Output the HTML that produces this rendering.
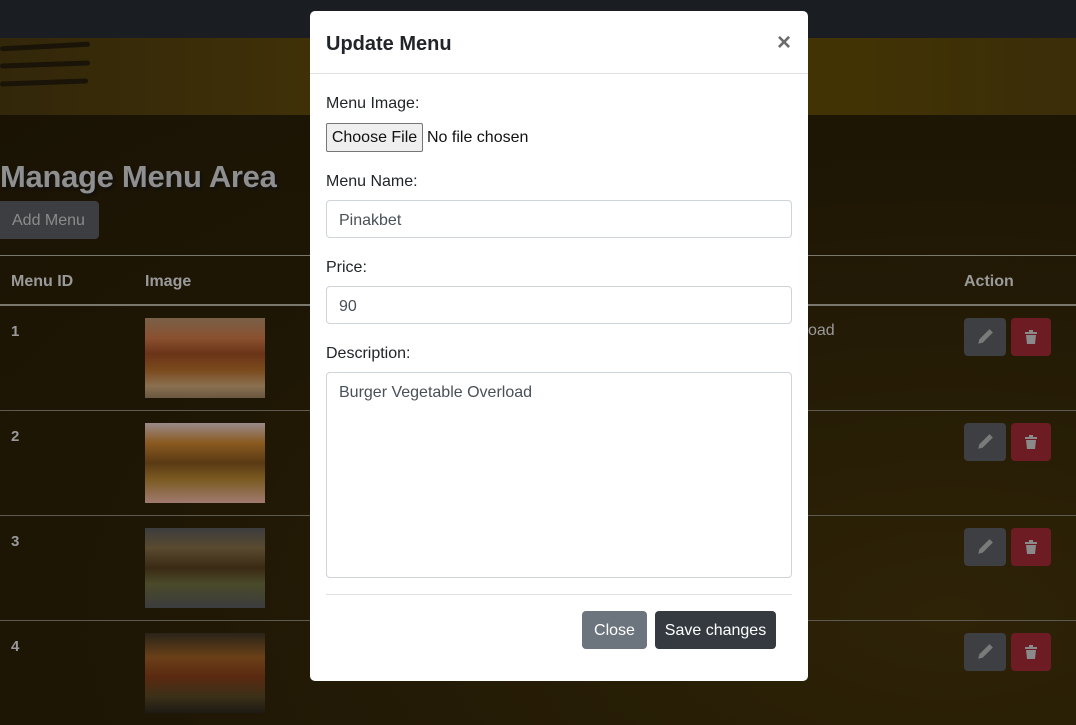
<!DOCTYPE html>
<html><head><meta charset="utf-8"><style>
*{box-sizing:border-box;margin:0;padding:0}
body{width:1076px;height:725px;overflow:hidden;font-family:"Liberation Sans",sans-serif;position:relative;background:#1e1604}
.nav{position:absolute;left:0;top:0;width:1076px;height:38px;background:#1a1e23}
.band{position:absolute;left:0;top:38px;width:1076px;height:77px;background:linear-gradient(90deg,#33270a,#443406 40%,#423305 80%,#3a2d08)}
.main{position:absolute;left:0;top:115px;width:1076px;height:610px;background:radial-gradient(ellipse at 950px 500px,#2e2307,#1f1705 60%,#1a1304)}
.fork{position:absolute;height:5px;background:#1a1408;border-radius:3px}
h1{position:absolute;left:0;top:159px;font-size:31px;color:#8f8f8f;font-weight:bold;text-shadow:2px 2px 2px #111;letter-spacing:-0.3px}
.add{position:absolute;left:0;top:201px;width:99px;height:38px;background:#3c3e42;border-radius:0 4px 4px 0;color:#8c8c8c;font-size:16px;line-height:40px;padding-left:12px}
.hl{position:absolute;left:0;width:1076px;background:#7a776d}
.th{position:absolute;top:273px;color:#9a9a9a;font-weight:bold;font-size:16px}
.id{position:absolute;left:11px;color:#9a9a9a;font-weight:bold;font-size:15px}
.img{position:absolute;left:145px;width:120px;height:80px}
.eb,.db{position:absolute;width:42px;height:38px;border-radius:4px}
.eb{left:964px;background:#3d3f43}
.db{left:1011px;width:40px;background:#6e1c23}
.eb svg,.db svg{position:absolute;left:12px;top:10px}
.modal{position:absolute;left:310px;top:11px;width:498px;height:670px;background:#fff;border-radius:5px}
.mh{height:63px;border-bottom:1px solid #dee2e6;position:relative}
.mh b{position:absolute;left:16px;top:22px;font-size:20px;color:#212529;font-weight:bold}
.x{position:absolute;right:17px;top:18px;font-size:24px;color:#6c6c6c;font-weight:bold}
.lab{position:absolute;left:16px;font-size:16px;color:#212529}
.inp{position:absolute;left:16px;width:466px;border:1px solid #ced4da;border-radius:4px;font-size:16px;color:#495057;padding-left:12px}
.cf{position:absolute;left:16px;top:112px;width:97px;height:29px;background:#efefef;border:1px solid #767676;border-radius:2px;font-size:16px;text-align:center;line-height:27px;color:#111}
.btn{position:absolute;top:600px;height:38px;border-radius:4px;color:#fff;font-size:16px;line-height:40px;text-align:center}
</style></head><body>
<div class="nav"></div>
<div class="band"></div>
<div class="fork" style="left:0;top:44px;width:90px;transform:rotate(-3deg)"></div>
<div class="fork" style="left:0;top:62px;width:90px;transform:rotate(-2deg)"></div>
<div class="fork" style="left:0;top:80px;width:88px;transform:rotate(-2deg)"></div>
<div class="main"></div>
<h1>Manage Menu Area</h1>
<div class="add">Add Menu</div>
<div class="hl" style="top:255px;height:1px"></div>
<div class="th" style="left:11px">Menu ID</div>
<div class="th" style="left:145px">Image</div>
<div class="th" style="left:964px">Action</div>
<div class="hl" style="top:304px;height:2px"></div>
<div class="hl" style="top:410px;height:1px;background:#5e5a50"></div>
<div class="hl" style="top:515px;height:1px;background:#5e5a50"></div>
<div class="hl" style="top:620px;height:1px;background:#5e5a50"></div>
<div class="id" style="top:323px">1</div>
<div class="id" style="top:428px">2</div>
<div class="id" style="top:533px">3</div>
<div class="id" style="top:638px">4</div>
<div style="position:absolute;left:808px;top:322px;color:#9a9a9a;font-size:16px">oad</div>
<div class="img" style="top:318px;background:linear-gradient(180deg,#7a6048 0,#8a5030 25%,#6a3418 45%,#7a4a1c 65%,#8a7050 85%,#6a5840 100%)"></div>
<div class="img" style="top:423px;background:linear-gradient(180deg,#9a8a8a 0,#8a5a20 25%,#5a3a14 50%,#7a5a20 70%,#a07a70 100%)"></div>
<div class="img" style="top:528px;background:linear-gradient(180deg,#3c3c3e 0,#5a4a30 25%,#3a2a14 50%,#4a4a2a 70%,#3c3c3e 100%)"></div>
<div class="img" style="top:633px;background:linear-gradient(180deg,#2a2418 0,#6a4018 30%,#5a2a10 55%,#3a3018 80%,#1e1a14 100%)"></div>
<div class="eb" style="top:318px"><svg width="18" height="18" viewBox="0 0 16 16"><path d="M12 1l3 3-9 9-4 1 1-4z" fill="#7a7a7a"/></svg></div>
<div class="db" style="top:318px"><svg width="16" height="18" viewBox="0 0 16 16"><path d="M2 3h12v2H2zM6 1h4v2H6zM3 6h10l-1 9H4z" fill="#8a8a8a"/></svg></div>
<div class="eb" style="top:423px"><svg width="18" height="18" viewBox="0 0 16 16"><path d="M12 1l3 3-9 9-4 1 1-4z" fill="#7a7a7a"/></svg></div>
<div class="db" style="top:423px"><svg width="16" height="18" viewBox="0 0 16 16"><path d="M2 3h12v2H2zM6 1h4v2H6zM3 6h10l-1 9H4z" fill="#8a8a8a"/></svg></div>
<div class="eb" style="top:528px"><svg width="18" height="18" viewBox="0 0 16 16"><path d="M12 1l3 3-9 9-4 1 1-4z" fill="#7a7a7a"/></svg></div>
<div class="db" style="top:528px"><svg width="16" height="18" viewBox="0 0 16 16"><path d="M2 3h12v2H2zM6 1h4v2H6zM3 6h10l-1 9H4z" fill="#8a8a8a"/></svg></div>
<div class="eb" style="top:633px"><svg width="18" height="18" viewBox="0 0 16 16"><path d="M12 1l3 3-9 9-4 1 1-4z" fill="#7a7a7a"/></svg></div>
<div class="db" style="top:633px"><svg width="16" height="18" viewBox="0 0 16 16"><path d="M2 3h12v2H2zM6 1h4v2H6zM3 6h10l-1 9H4z" fill="#8a8a8a"/></svg></div>

<div class="modal">
<div class="mh"><b>Update Menu</b><span class="x">×</span></div>
<div class="lab" style="top:84px">Menu Image:</div>
<div class="cf">Choose File</div>
<div style="position:absolute;left:117px;top:118px;font-size:16px;color:#111">No file chosen</div>
<div class="lab" style="top:162px">Menu Name:</div>
<div class="inp" style="top:189px;height:38px;line-height:40px">Pinakbet</div>
<div class="lab" style="top:248px">Price:</div>
<div class="inp" style="top:275px;height:38px;line-height:40px">90</div>
<div class="lab" style="top:334px">Description:</div>
<div class="inp" style="top:361px;height:206px;padding-top:11px">Burger Vegetable Overload</div>
<div style="position:absolute;left:16px;top:583px;width:466px;height:1px;background:#dee2e6"></div>
<div class="btn" style="left:272px;width:65px;background:#6c757d">Close</div>
<div class="btn" style="left:345px;width:121px;background:#343a40">Save changes</div>
</div>
</body></html>
